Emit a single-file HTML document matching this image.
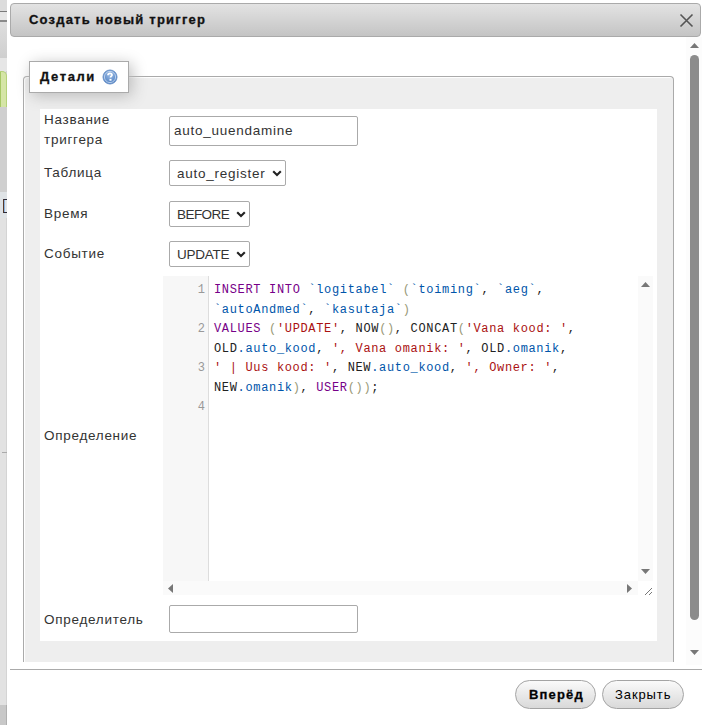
<!DOCTYPE html>
<html><head><meta charset="utf-8">
<style>
*{box-sizing:border-box;margin:0;padding:0}
html,body{width:702px;height:725px;overflow:hidden;background:#fff;font-family:"Liberation Sans",sans-serif;color:#333}
.abs{position:absolute}
#strip{left:0;top:0;width:7px;height:725px;background:#e2e2e2;border-right:1px solid #d4d4d4}
#title{left:10px;top:3px;width:691px;height:34px;border:1px solid #aaa;border-radius:4px;background:linear-gradient(#e3e3e3,#c4c4c4)}
#ttext{left:29px;top:10px;font-weight:bold;font-size:13px;letter-spacing:1.2px;color:#111;-webkit-text-stroke:0.3px #111;line-height:20px;white-space:nowrap}
#fs{left:23px;top:76px;width:651px;height:586px;border:1px solid #aaa;border-bottom:none;border-radius:4px 4px 0 0;background:#eee;box-shadow:inset 1px 1px 1px #fff}
#legend{left:29px;top:61px;width:100px;height:32px;background:#fff;border:1px solid #aaa;box-shadow:3px 3px 15px #bbb}
#ltext{left:40px;top:67px;font-weight:bold;font-size:13px;letter-spacing:1.6px;color:#111;-webkit-text-stroke:0.3px #111;line-height:20px;white-space:nowrap}
#help{left:103px;top:70px;width:14px;height:14px;border-radius:50%;background:radial-gradient(circle at 50% 40%,#8fb4e0,#4a7fc0);border:1px solid #6a90c8}
#help:after{content:"?";position:absolute;left:0;top:-1px;width:12px;text-align:center;font:bold 10px "Liberation Sans",sans-serif;color:#fff;line-height:14px}
#tbl{left:40px;top:109px;width:617px;height:532px;background:#fff}
.lbl{position:absolute;left:44px;font-size:13.5px;letter-spacing:0.72px;color:#333;line-height:20px;white-space:nowrap}
.inp{position:absolute;border:1px solid #aaa;border-radius:2px;background:#fff}
.val{position:absolute;font-size:13.5px;color:#333;line-height:20px;white-space:nowrap;letter-spacing:0.75px}
.chev{position:absolute;width:12px;height:10px}
#sep{left:10px;top:669px;width:692px;height:1px;background:#aaa}
.btn{position:absolute;top:680px;height:29px;border:1px solid #a4a4a4;border-radius:15px;background:linear-gradient(#fafafa,#d9d9d9)}
.btext{position:absolute;top:685px;font-size:13px;line-height:20px;color:#000;white-space:nowrap}
#ed{left:163px;top:276px;width:490px;height:319px;background:#fff}
#gut{left:163px;top:276px;width:46px;height:305px;background:#f7f7f7;border-right:1px solid #ddd}
.code{position:absolute;left:214px;font-family:"Liberation Mono",monospace;font-size:12px;letter-spacing:0.66px;line-height:19.5px;white-space:pre;color:#222}
.ln{position:absolute;left:163px;width:42px;text-align:right;font-family:"Liberation Mono",monospace;font-size:12px;line-height:19.5px;color:#999}
.k{color:#770088}.v{color:#0055aa}.s{color:#aa1111}.b{color:#999977}
#vtrack{left:638px;top:276px;width:15px;height:305px;background:#fafafa}
#htrack{left:163px;top:581px;width:475px;height:14px;background:#fafafa}
#sbar{left:686px;top:37px;width:16px;height:628px;background:#fcfcfc}
#thumb{left:690px;top:55px;width:9px;height:565px;background:#8c8c8c;border-radius:5px}
</style></head><body>
<div id="strip" class="abs"></div>
<div class="abs" style="left:0;top:0;width:7px;height:11px;background:#dcdcdc"></div>
<div class="abs" style="left:0;top:11px;width:7px;height:1px;background:#7a7a7a"></div>
<div class="abs" style="left:0;top:12px;width:7px;height:8px;background:#e6e6e6"></div>
<div class="abs" style="left:0;top:20px;width:7px;height:2px;background:#8a8a8a"></div>
<div class="abs" style="left:0;top:22px;width:7px;height:36px;background:linear-gradient(#dedede,#cfcfcf)"></div>
<div class="abs" style="left:0;top:58px;width:7px;height:13px;background:#e6e6e6"></div>
<div class="abs" style="left:0;top:71px;width:7px;height:36px;background:#d5e5a6;border-top:1px solid #b5d27a;border-right:1px solid #b5d27a;border-left:1px solid #a6c864;border-top-right-radius:5px"></div>
<div class="abs" style="left:0;top:107px;width:7px;height:85px;background:#cfcfcf"></div>
<div class="abs" style="left:0;top:192px;width:7px;height:26px;background:#dfe3e6"></div>
<div class="abs" style="left:3px;top:199px;width:4px;height:14px;border:1px solid #2a2a3a;border-left:1px solid #5a3a28;border-right:none;background:linear-gradient(90deg,#8db4e0 0,#8db4e0 1px,#e2e6ea 1px)"></div>
<div class="abs" style="left:2px;top:452px;width:5px;height:1px;background:#aaa"></div>
<div class="abs" style="left:0;top:705px;width:7px;height:20px;background:#c8c8c8;border-right:1px solid #b0b0b0"></div>
<div id="title" class="abs"></div>
<div id="ttext" class="abs">Создать новый триггер</div>
<svg class="abs" style="left:679px;top:13px" width="15" height="15" viewBox="0 0 15 15"><path d="M1.5 1.5L13.5 13.5M13.5 1.5L1.5 13.5" stroke="#555" stroke-width="1.6" fill="none"/></svg>

<div id="sbar" class="abs"></div>
<svg class="abs" style="left:689px;top:42px" width="11" height="7" viewBox="0 0 11 7"><path d="M1 6L5.5 1L10 6Z" fill="#777"/></svg>
<div id="thumb" class="abs"></div>
<svg class="abs" style="left:689px;top:649px" width="11" height="7" viewBox="0 0 11 7"><path d="M1 1L5.5 6L10 1Z" fill="#777"/></svg>

<div id="fs" class="abs"></div>
<div id="legend" class="abs"></div>
<div id="ltext" class="abs">Детали</div>
<svg class="abs" style="left:102px;top:69px" width="16" height="16" viewBox="0 0 16 16"><defs><radialGradient id="hg" cx="50%" cy="35%" r="65%"><stop offset="0" stop-color="#9dbde6"/><stop offset="1" stop-color="#4a7cc0"/></radialGradient></defs><circle cx="8" cy="8" r="7" fill="url(#hg)" stroke="#6b93c9" stroke-width="1"/><circle cx="8" cy="8" r="5.6" fill="none" stroke="#d8e6f6" stroke-width="0.9" opacity="0.8"/><path d="M6 6.3C6 4.9 7 4.3 8 4.3C9.2 4.3 10 5 10 6C10 7.2 8.5 7.3 8.5 8.6" stroke="#fff" stroke-width="1.7" fill="none"/><rect x="7.5" y="9.9" width="2" height="1.8" fill="#fff"/></svg>
<div id="tbl" class="abs"></div>

<div class="lbl" style="top:110px">Название</div>
<div class="lbl" style="top:130px">триггера</div>
<div class="inp" style="left:169px;top:116px;width:189px;height:30px"></div>
<div class="val" style="left:174px;top:121px">auto_uuendamine</div>

<div class="lbl" style="top:163px">Таблица</div>
<div class="inp" style="left:169px;top:160px;width:117px;height:26px"></div>
<div class="val" style="left:177px;top:164px">auto_register</div>
<svg class="chev" style="left:272px;top:168px" viewBox="0 0 12 10"><path d="M1.2 3.2L5 7L8.8 3.2" stroke="#222" stroke-width="2.1" fill="none"/></svg>

<div class="lbl" style="top:204px">Время</div>
<div class="inp" style="left:169px;top:201px;width:81px;height:26px"></div>
<div class="val" style="left:177px;top:205px;letter-spacing:-0.55px">BEFORE</div>
<svg class="chev" style="left:236px;top:209px" viewBox="0 0 12 10"><path d="M1.2 3.2L5 7L8.8 3.2" stroke="#222" stroke-width="2.1" fill="none"/></svg>

<div class="lbl" style="top:244px">Событие</div>
<div class="inp" style="left:169px;top:241px;width:81px;height:26px"></div>
<div class="val" style="left:177px;top:245px;letter-spacing:-0.25px">UPDATE</div>
<svg class="chev" style="left:236px;top:249px" viewBox="0 0 12 10"><path d="M1.2 3.2L5 7L8.8 3.2" stroke="#222" stroke-width="2.1" fill="none"/></svg>

<div id="ed" class="abs"></div>
<div id="gut" class="abs"></div>
<div id="vtrack" class="abs"></div>
<div id="htrack" class="abs"></div>
<div class="ln" style="top:281px">1</div>
<div class="ln" style="top:320px">2</div>
<div class="ln" style="top:359px">3</div>
<div class="ln" style="top:398px">4</div>
<div class="code" style="top:281px"><span class="k">INSERT</span> <span class="k">INTO</span> <span class="v">`logitabel`</span> <span class="b">(</span><span class="v">`toiming`</span>, <span class="v">`aeg`</span>,
<span class="v">`autoAndmed`</span>, <span class="v">`kasutaja`</span><span class="b">)</span>
<span class="k">VALUES</span> <span class="b">(</span><span class="s">'UPDATE'</span>, NOW<span class="b">()</span>, CONCAT<span class="b">(</span><span class="s">'Vana kood: '</span>,
OLD<span class="v">.auto_kood</span>, <span class="s">', Vana omanik: '</span>, OLD<span class="v">.omanik</span>,
<span class="s">' | Uus kood: '</span>, NEW<span class="v">.auto_kood</span>, <span class="s">', Owner: '</span>,
NEW<span class="v">.omanik</span><span class="b">)</span>, <span class="k">USER</span><span class="b">())</span>;</div>
<svg class="abs" style="left:640px;top:281px" width="11" height="7" viewBox="0 0 11 7"><path d="M1 6L5.5 1L10 6Z" fill="#777"/></svg>
<svg class="abs" style="left:640px;top:568px" width="11" height="7" viewBox="0 0 11 7"><path d="M1 1L5.5 6L10 1Z" fill="#777"/></svg>
<svg class="abs" style="left:167px;top:583px" width="7" height="11" viewBox="0 0 7 11"><path d="M6 1L1 5.5L6 10Z" fill="#777"/></svg>
<svg class="abs" style="left:626px;top:583px" width="7" height="11" viewBox="0 0 7 11"><path d="M1 1L6 5.5L1 10Z" fill="#777"/></svg>
<svg class="abs" style="left:644px;top:587px" width="9" height="9" viewBox="0 0 9 9"><path d="M1 8L8 1M5 8L8 5" stroke="#777" stroke-width="1" fill="none"/></svg>

<div class="lbl" style="top:426px">Определение</div>

<div class="lbl" style="top:610px">Определитель</div>
<div class="inp" style="left:169px;top:605px;width:189px;height:28px"></div>

<div id="sep" class="abs"></div>
<div class="btn" style="left:515px;width:81px"></div>
<div class="btext" style="left:529px;font-weight:bold;letter-spacing:1.15px;-webkit-text-stroke:0.3px #111">Вперёд</div>
<div class="btn" style="left:602px;width:82px"></div>
<div class="btext" style="left:615px;letter-spacing:0.9px">Закрыть</div>
</body></html>
